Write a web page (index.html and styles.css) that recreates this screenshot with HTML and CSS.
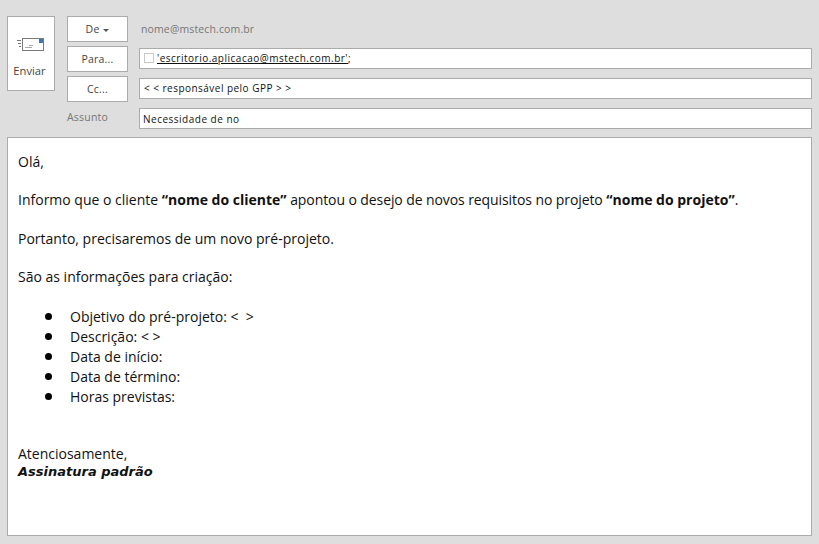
FILE: index.html
```html
<!DOCTYPE html>
<html lang="pt-BR">
<head>
<meta charset="utf-8">
<title>Mensagem</title>
<link rel="stylesheet" href="styles.css">
</head>
<body>
<div class="compose">
  <header class="head">
    <button class="send">
      <svg class="send-icon" width="30" height="16" viewBox="0 0 30 16">
        <rect x="6.5" y="0.5" width="21" height="12" fill="#fff" stroke="#7a7a7a"/>
        <rect x="23" y="1" width="4" height="4" fill="#3f78b0"/>
        <path d="M9 9.5h7M13 7.5h4" stroke="#a8a8a8" fill="none"/>
        <path d="M1 2.5h4M2 5.5h3M3 8.5h2" stroke="#777" fill="none"/>
      </svg>
      <span class="send-label">Enviar</span>
    </button>
    <div class="fields">
      <div class="row row-from">
        <button class="btn">De <i class="caret"></i></button>
        <span class="from">nome@mstech.com.br</span>
      </div>
      <div class="row row-to">
        <button class="btn">Para...</button>
        <div class="input"><i class="check"></i><span class="addr">'escritorio.aplicacao@mstech.com.br'</span>;</div>
      </div>
      <div class="row row-cc">
        <button class="btn">Cc...</button>
        <div class="input">&lt; &lt; responsável pelo GPP &gt; &gt;</div>
      </div>
      <div class="row row-subject">
        <label class="label">Assunto</label>
        <div class="input">Necessidade de no</div>
      </div>
    </div>
  </header>
  <main class="body">
    <p>Olá,</p>
    <p>Informo que o cliente <b>“nome do cliente”</b> <span class="tight">apontou o desejo de novos requisitos no projeto</span> <b>“nome do projeto”</b>.</p>
    <p>Portanto, precisaremos de um novo pré-projeto.</p>
    <p>São as informações para criação:</p>
    <ul>
      <li>Objetivo do pré-projeto: &lt;&nbsp; &gt;</li>
      <li>Descrição: &lt; &gt;</li>
      <li>Data de início:</li>
      <li>Data de término:</li>
      <li>Horas previstas:</li>
    </ul>
    <p class="closing">Atenciosamente,</p>
    <p class="signature">Assinatura padrão</p>
  </main>
</div>
</body>
</html>
```
FILE: styles.css
```css
* { box-sizing: border-box; }
html, body { margin: 0; height: 100%; }
body { background: #dedede; font-family: "Open Sans", "Noto Sans", sans-serif; color: #111; overflow: hidden; }
.compose { width: 819px; height: 544px; padding: 16px 7px 8px; display: flex; flex-direction: column; }
.head { display: flex; align-items: flex-start; gap: 12px; }
button { font: inherit; margin: 0; }
.send { width: 48px; height: 75px; padding: 21px 0 0; background: #fff; border: 1px solid #ababab; color: #444; font-size: 11.2px; display: flex; flex-direction: column; align-items: center; gap: 9px; }
.send-icon { display: block; }
.send-label { margin-right: 3px; }
.fields { flex: 1; display: flex; flex-direction: column; }
.row { display: flex; align-items: center; gap: 11px; font-size: 10px; height: 26px; margin-bottom: 4px; }
.row-subject { height: 21px; margin: 2px 0 0; }
.btn { width: 61px; height: 26px; padding: 0; background: #fff; border: 1px solid #ababab; color: #444; font-size: 10.5px; letter-spacing: .2px; }
.caret { display: inline-block; vertical-align: middle; margin-left: 1px; border: 3px solid transparent; border-top-color: #555; border-bottom: 0; }
.from { color: #777; margin-left: 2px; letter-spacing: .13px; font-size: 10.5px; margin-top: -1px; }
.label { width: 61px; color: #777; font-size: 10.5px; letter-spacing: .2px; margin-top: -3px; }
.input { flex: 1; height: 21px; background: #fff; border: 1px solid #ababab; padding: 0 3px; display: flex; align-items: center; white-space: pre; color: #111; font-size: 10px; letter-spacing: .5px; }
.check { width: 10px; height: 10px; border: 1px solid #c8c8c8; background: #fff; margin: 0 3px 0 1px; }
.addr { text-decoration: underline; }
.row-to .input { margin-top: -2px; }
.row-cc .input { margin-top: -2px; padding-left: 4px; letter-spacing: .47px; }
.body { flex: 1; margin-top: 8px; background: #fff; border: 1px solid #ababab; padding: 14px 10px; font-size: 14px; line-height: 19px; }
.body p { margin: 0 0 19.4px; }
.body b { font-weight: 700; }
.tight { letter-spacing: -.09px; }
.body ul { margin: 0 0 37px; padding: 1px 0 0 27px; list-style: none; }
.body li { height: 20px; display: flex; align-items: center; white-space: pre; }
.body li::before { content: ""; width: 7px; height: 7px; border-radius: 50%; background: #000; margin-right: 18px; }
.body .closing { margin: 0; }
.body .signature { margin: -1px 0 0; font-family: "DejaVu Sans", sans-serif; font-size: 13px; font-weight: 700; font-style: italic; }
```
